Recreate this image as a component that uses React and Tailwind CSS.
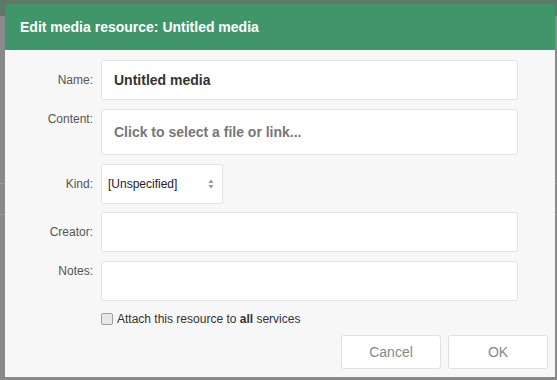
import React from "react";

function Row({ label, children, top = "items-center" }) {
  return (
    <div className={`flex ${top} gap-[8px]`}>
      <label className={`w-[88px] shrink-0 text-right text-[12px] text-[#555] ${top === "items-start" ? "pt-[1px]" : ""}`}>{label}</label>
      {children}
    </div>
  );
}

export default function App() {
  return (
    <div className="w-[557px] h-[380px] bg-[#8a8a8a] relative overflow-hidden" style={{ fontFamily: '"Liberation Sans", Arial, sans-serif' }}>
      <div className="absolute left-0 top-0 w-full h-[16px] bg-[#5f7869]" />
      <div className="absolute left-0 top-[183px] w-full h-px bg-[#9c9c9c]" />
      <div className="absolute left-0 top-[214px] w-full h-px bg-[#9c9c9c]" />
      <div className="absolute left-[5px] top-[4px] w-[550px] h-[373px] bg-[#f7f7f7] flex flex-col">
        <div className="h-[46px] bg-[#40956b] flex items-center px-[15px]">
          <h1 className="text-white font-bold text-[14px]">Edit media resource: Untitled media</h1>
        </div>
        <div className="flex flex-col pr-[37px] pt-[10px]">
          <Row label="Name:">
            <div className="flex-1 h-[40px] bg-white border border-[#e3e3e3] rounded-[3px] flex items-center px-[12px] text-[14px] font-bold text-[#333]">
              Untitled media
            </div>
          </Row>
          <div className="h-[9px]" />
          <Row label="Content:" top="items-start">
            <div className="flex-1 h-[46px] bg-white border border-[#e3e3e3] rounded-[3px] flex items-center px-[12px] text-[14px] font-bold text-[#777] cursor-pointer">
              Click to select a file or link...
            </div>
          </Row>
          <div className="h-[9px]" />
          <Row label="Kind:">
            <div className="w-[122px] h-[40px] bg-white border border-[#e3e3e3] rounded-[3px] flex items-center justify-between pl-[6px] pr-[8px] text-[12px] text-[#222]">
              <span>[Unspecified]</span>
              <svg width="6" height="10" viewBox="0 0 6 10">
                <path d="M3 0.5 L5.5 4 L0.5 4 Z" fill="#999" />
                <path d="M3 9.5 L5.5 6 L0.5 6 Z" fill="#999" />
              </svg>
            </div>
          </Row>
          <div className="h-[8px]" />
          <Row label="Creator:">
            <div className="flex-1 h-[40px] bg-white border border-[#e3e3e3] rounded-[3px]" />
          </Row>
          <div className="h-[9px]" />
          <Row label="Notes:" top="items-start">
            <div className="flex-1 h-[40px] bg-white border border-[#e3e3e3] rounded-[3px]" />
          </Row>
          <div className="flex items-center gap-[4px] pl-[96px] mt-[9px]">
            <span className="w-[12px] h-[12px] rounded-[2px] border border-[#a0a0a0] bg-[#e8e8e8]" />
            <span className="text-[12px] text-[#333]">
              Attach this resource to <b>all</b> services
            </span>
          </div>
        </div>
        <div className="flex justify-end gap-[7px] pr-[7px] mt-[7px]">
          <button className="w-[100px] h-[34px] bg-white border border-[#e0e0e0] rounded-[3px] text-[14px] text-[#888]">Cancel</button>
          <button className="w-[100px] h-[34px] bg-white border border-[#e0e0e0] rounded-[3px] text-[14px] text-[#888]">OK</button>
        </div>
      </div>
    </div>
  );
}
